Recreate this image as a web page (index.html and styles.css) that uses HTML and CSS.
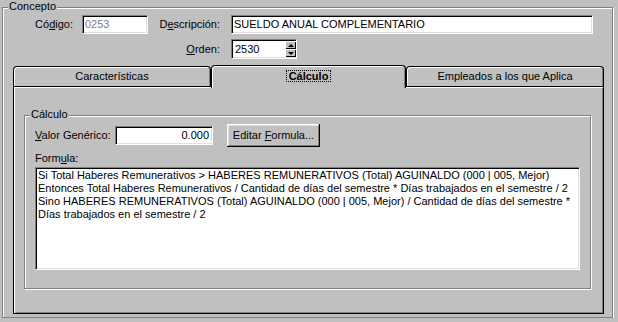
FILE: index.html
```html
<!DOCTYPE html>
<html lang="es">
<head>
    <meta charset="UTF-8">
    <title>Concepto</title>
    <link rel="stylesheet" href="styles.css">
</head>
<body>
    <div class="group concept">
        <span class="group-title">Concepto</span>
        <div class="fields">
            <label class="lbl">Có<u>d</u>igo:</label>
            <div class="edit disabled">0253</div>
            <label class="lbl wide">D<u>e</u>scripción:</label>
            <div class="edit">SUELDO ANUAL COMPLEMENTARIO</div>
            <label class="lbl wide orden-lbl"><u>O</u>rden:</label>
            <div class="edit spin">2530
                <span class="spinner">
                    <span class="spin-btn"><i class="arrow up"></i></span>
                    <span class="spin-btn"><i class="arrow down"></i></span>
                </span>
            </div>
        </div>

        <div class="tabs">
            <div class="tab tab-wide">Características</div>
            <div class="tab active"><span class="focus">Cálculo</span></div>
            <div class="tab tab-wide">Empleados a los que Aplica</div>
        </div>
        <div class="panel">
            <div class="group calc">
                <span class="group-title">Cálculo</span>
                <div class="value-row">
                    <label class="value-lbl"><u>V</u>alor Genérico:</label>
                    <div class="edit num">0.000</div>
                    <button class="btn">Editar <u>F</u>ormula...</button>
                </div>
                <div class="formula-lbl">Form<u>u</u>la:</div>
                <div class="edit formula">
                    <div>Si Total Haberes Remunerativos &gt; HABERES REMUNERATIVOS (Total) AGUINALDO (000 | 005, Mejor)</div>
                    <div>Entonces Total Haberes Remunerativos / Cantidad de días del semestre * Días trabajados en el semestre / 2</div>
                    <div>Sino HABERES REMUNERATIVOS (Total) AGUINALDO (000 | 005, Mejor) / Cantidad de días del semestre *</div>
                    <div>Días trabajados en el semestre / 2</div>
                </div>
            </div>
        </div>
    </div>
</body>
</html>
```
FILE: styles.css
```css
body {
    margin: 0;
    background: #c0c0c0;
    font: 11px/13px "Liberation Sans", Arial, sans-serif;
    color: #000;
}
u {
    text-decoration: underline;
    text-underline-offset: 1px;
}
/* etched group box */
.group {
    position: relative;
    box-sizing: border-box;
    border: 1px solid #808080;
    box-shadow: inset 1px 1px 0 #fff, 1px 1px 0 #fff;
}
.group-title {
    position: absolute;
    top: -8px;
    left: 5px;
    padding: 0 1px;
    background: #c0c0c0;
    line-height: 13px;
}
.concept {
    margin: 7px 0 0 2px;
    width: 611px;
    height: 311px;
    padding-top: 7px;
}
.fields {
    display: grid;
    grid-template-columns: 79px 66px 83px 362px;
    grid-template-rows: 19px 20px;
    row-gap: 5px;
}
.lbl {
    align-self: center;
    text-align: right;
    padding-right: 9px;
}
.lbl.wide {
    padding-right: 11px;
}
.orden-lbl {
    grid-column: 3;
}
/* sunken edit box */
.edit {
    position: relative;
    box-sizing: border-box;
    background: #fff;
    border: 1px solid;
    border-color: #808080 #fff #fff #808080;
    box-shadow: inset 1px 1px 0 #000, inset -1px -1px 0 #dfdfdf;
    padding: 0 2px;
    line-height: 17px;
    white-space: nowrap;
    overflow: hidden;
}
.edit.disabled {
    color: #808080;
}
.edit.spin {
    width: 66px;
    padding-left: 3px;
    line-height: 18px;
}
.spinner {
    position: absolute;
    top: 1px;
    right: 0;
    width: 11px;
    height: 16px;
    display: flex;
    flex-direction: column;
}
.spin-btn {
    flex: 1;
    display: flex;
    align-items: center;
    justify-content: center;
    background: #c0c0c0;
    box-shadow: inset 1px 1px 0 #fff, inset -1px -1px 0 #000;
}
.arrow {
    width: 0;
    height: 0;
    border-left: 3px solid transparent;
    border-right: 3px solid transparent;
}
.arrow.up {
    border-bottom: 3px solid #000;
}
.arrow.down {
    border-top: 3px solid #000;
}
/* tab strip */
.tabs {
    display: flex;
    align-items: flex-end;
    margin: 6px 0 0 10px;
}
.tab {
    box-sizing: border-box;
    width: 198px;
    height: 20px;
    background: #c0c0c0;
    border: 1px solid #000;
    border-bottom: 0;
    border-radius: 4px 4px 0 0;
    box-shadow: inset 1px 1px 0 #fff, inset -1px 0 0 #808080;
    text-align: center;
    line-height: 18px;
}
.tab.active {
    position: relative;
    z-index: 1;
    width: 195px;
    height: 23px;
    margin-bottom: -2px;
    font-weight: bold;
    line-height: 19px;
}
.focus {
    display: inline-block;
    padding: 0 2px;
    border: 1px dotted #000;
    line-height: 10px;
    vertical-align: middle;
}
.panel {
    box-sizing: border-box;
    width: 591px;
    height: 228px;
    margin-left: 10px;
    border: 1px solid #000;
    box-shadow: inset 1px 1px 0 #fff, inset -1px -1px 0 #808080;
    padding: 28px 0 0 10px;
}
.calc {
    width: 567px;
    height: 174px;
    padding: 8px 0 0 10px;
}
.value-row {
    display: flex;
    align-items: center;
    height: 23px;
}
.value-lbl {
    width: 80px;
}
.edit.num {
    width: 98px;
    height: 19px;
    text-align: right;
    padding-right: 3px;
}
.btn {
    box-sizing: border-box;
    width: 93px;
    height: 23px;
    margin-left: 14px;
    padding: 0;
    border: 0;
    background: #c0c0c0;
    box-shadow: inset -1px -1px 0 #000, inset 1px 1px 0 #fff, inset -2px -2px 0 #808080, inset 2px 2px 0 #dfdfdf;
    font: inherit;
    color: #000;
}
.formula-lbl {
    margin-top: 5px;
}
.edit.formula {
    margin-top: 2px;
    width: 545px;
    height: 103px;
    padding: 1px 2px;
    line-height: 13px;
}
```
